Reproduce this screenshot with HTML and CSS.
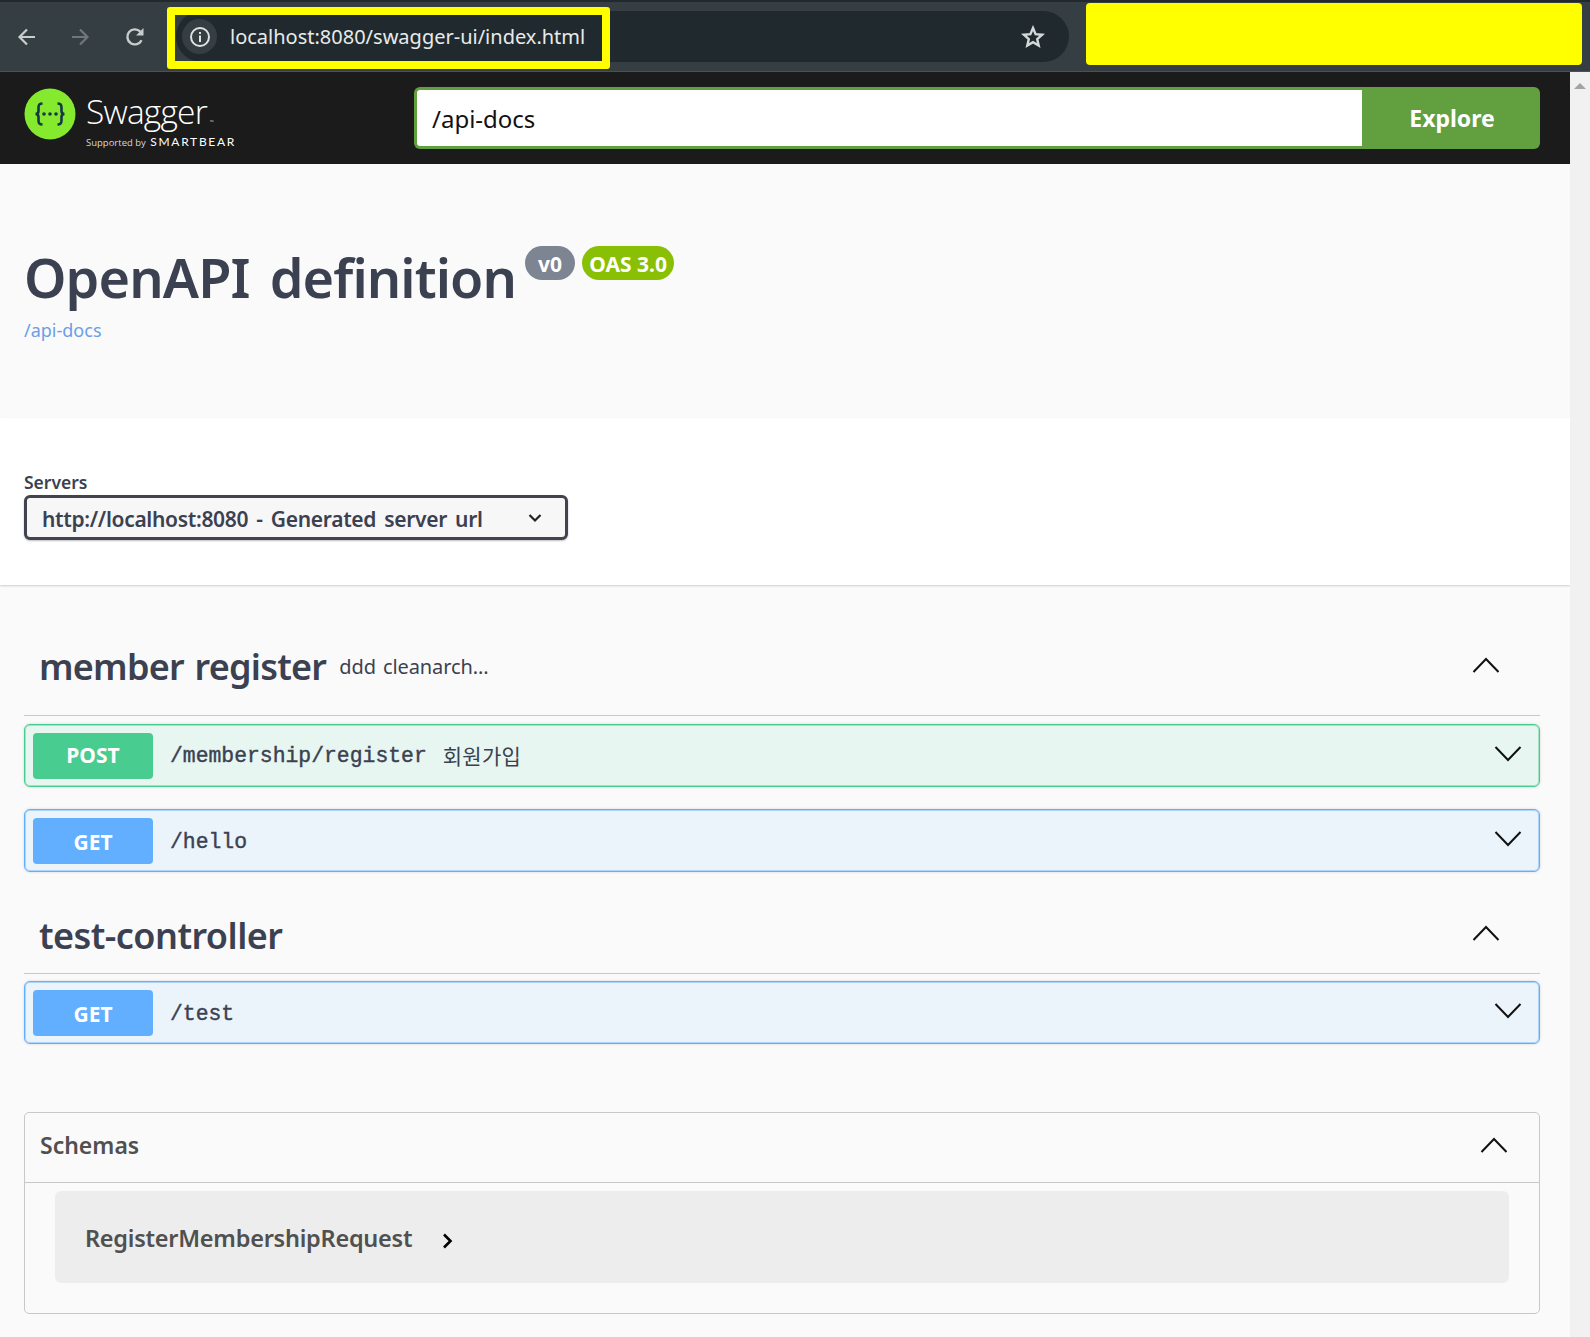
FILE: index.html
```html
<!DOCTYPE html>
<html lang="en">
<head>
  <meta charset="UTF-8"/>
  <title>Swagger UI</title>
  <meta name="viewport" content="width=device-width, initial-scale=1.0"/>
  <link rel="stylesheet" href="styles.css">
</head>
<body>

  <header class="toolbar">
    <div class="nav-buttons">
      <svg class="nav-icon" width="24" height="24" viewBox="0 0 24 24"><path d="M20 12H5M12 4.5 4.5 12l7.500 7.500" fill="none" stroke="#c8cccd" stroke-width="2.200"/></svg>
      <svg class="nav-icon nav-off" width="24" height="24" viewBox="0 0 24 24"><path d="M4 12h15M12 4.500l7.500 7.500-7.500 7.500" fill="none" stroke="#70777a" stroke-width="2.200"/></svg>
      <svg class="nav-icon nav-reload" width="24" height="24" viewBox="0 0 24 24"><path d="M18.600 15.200A7.500 7.500 0 1 1 17.300 6.700" fill="none" stroke="#c8cccd" stroke-width="2.400"/><path d="M20.500 3V10.500H13z" fill="#c8cccd"/></svg>
    </div>
    <div class="omnibox">
      <span class="site-info">
        <svg width="24" height="24" viewBox="0 0 24 24"><circle cx="12" cy="12" r="9" fill="none" stroke="#dfe2e3" stroke-width="2"/><path d="M12 10.500V17M12 7v2" stroke="#dfe2e3" stroke-width="2"/></svg>
      </span>
      <span class="url">localhost:8080/swagger-ui/index.html</span>
      <svg class="star" width="24" height="24" viewBox="0 0 24 24"><path d="M12 3l2.600 6.100 6.600.6-5 4.400 1.500 6.500L12 17.200l-5.700 3.400 1.500-6.500-5-4.400 6.600-.6z" fill="none" stroke="#d5d8d9" stroke-width="2.400"/></svg>
    </div>
    <div class="redact-block"></div>
    <div class="redact-outline"></div>
  </header>

  <div class="window">
    <main class="page">

      <section class="topbar">
        <div class="brand">
          <svg class="brand-logo" width="52" height="52" viewBox="0 0 52 52">
            <circle cx="26" cy="26" r="25.500" fill="#85ea2d"/>
            <path d="M18.500 15.500c-3.500 0-4 1.500-4 4v3.500c0 2-1 3-3 3 2 0 3 1 3 3V32.500c0 2.500.5 4 4 4M33.500 15.500c3.500 0 4 1.500 4 4v3.500c0 2 1 3 3 3-2 0-3 1-3 3V32.500c0 2.500-.5 4-4 4" fill="none" stroke="#173647" stroke-width="2.600"/>
            <circle cx="20" cy="26" r="1.800" fill="#173647"/><circle cx="26" cy="26" r="1.800" fill="#173647"/><circle cx="32" cy="26" r="1.800" fill="#173647"/>
          </svg>
          <div class="brand-text">
            <div class="brand-name">Swagger<span class="brand-tm">™</span></div>
            <div class="brand-sub">Supported by <b>SMARTBEAR</b></div>
          </div>
        </div>
        <div class="explore">
          <div class="explore-input">/api-docs</div>
          <div class="explore-btn">Explore</div>
        </div>
      </section>

      <section class="info">
        <div class="title-row">
          <h1>OpenAPI definition</h1>
          <span class="badge badge-version">v0</span>
          <span class="badge badge-oas">OAS 3.0</span>
        </div>
        <a class="spec-link" href="#">/api-docs</a>
      </section>

      <section class="servers">
        <div class="servers-label">Servers</div>
        <div class="server-select">
          <span class="server-url">http://localhost:8080 - Generated server url</span>
          <svg width="20" height="20" viewBox="0 0 20 20"><path d="M4.500 7l5.500 5.500L15.500 7" fill="none" stroke="#222" stroke-width="2.200"/></svg>
        </div>
      </section>

      <section class="ops">
        <div class="tag-head tag-first">
          <h3>member register</h3>
          <span class="tag-desc">ddd cleanarch...</span>
          <svg class="tag-arrow" width="28" height="16" viewBox="0 0 28 16"><path d="M1.500 15 14 2l12.500 13" fill="none" stroke="#111" stroke-width="2"/></svg>
        </div>
        <div class="op op-post">
          <span class="method">POST</span>
          <span class="path">/membership/register</span>
          <span class="summary">회원가입</span>
          <svg class="op-arrow" width="28" height="16" viewBox="0 0 28 16"><path d="M1.500 1 14 14 26.500 1" fill="none" stroke="#111" stroke-width="2"/></svg>
        </div>
        <div class="op op-get op-gap">
          <span class="method">GET</span>
          <span class="path">/hello</span>
          <svg class="op-arrow" width="28" height="16" viewBox="0 0 28 16"><path d="M1.500 1 14 14 26.500 1" fill="none" stroke="#111" stroke-width="2"/></svg>
        </div>

        <div class="tag-head tag-second">
          <h3>test-controller</h3>
          <svg class="tag-arrow" width="28" height="16" viewBox="0 0 28 16"><path d="M1.500 15 14 2l12.500 13" fill="none" stroke="#111" stroke-width="2"/></svg>
        </div>
        <div class="op op-get">
          <span class="method">GET</span>
          <span class="path">/test</span>
          <svg class="op-arrow" width="28" height="16" viewBox="0 0 28 16"><path d="M1.500 1 14 14 26.500 1" fill="none" stroke="#111" stroke-width="2"/></svg>
        </div>

        <div class="schemas">
          <div class="schemas-head">
            <span>Schemas</span>
            <svg width="28" height="16" viewBox="0 0 28 16"><path d="M1.500 15 14 2l12.500 13" fill="none" stroke="#111" stroke-width="2"/></svg>
          </div>
          <div class="model">
            <span>RegisterMembershipRequest</span>
            <svg class="model-arrow" width="12" height="16" viewBox="0 0 12 16"><path d="M2 1.500 8.500 8 2 14.500" fill="none" stroke="#000" stroke-width="2.600"/></svg>
          </div>
        </div>
      </section>

    </main>
    <aside class="scrollbar"><span class="scroll-up"></span></aside>
  </div>

</body>
</html>
```

FILE: styles.css
```css
html, body {
  margin: 0;
  height: 1337px;
  overflow: hidden;
}
body {
  font-family: "Noto Sans", "Noto Sans CJK KR", sans-serif;
  color: #3b4151;
  background: #fafafa;
}

/* browser chrome */
.toolbar {
  position: relative;
  display: flex;
  align-items: center;
  height: 72px;
  box-sizing: border-box;
  background: #353e42;
  border-top: 2px solid #23282b;
  border-bottom: 1px solid #4a5255;
  padding-right: 8px;
}
.nav-buttons {
  display: flex;
  align-items: center;
  gap: 29px;
  padding-left: 15px;
  width: 176px;
  box-sizing: border-box;
}
.nav-reload {
  margin-left: 2px;
}
.omnibox {
  display: flex;
  align-items: center;
  width: 893px;
  height: 51px;
  box-sizing: border-box;
  border-radius: 26px;
  background: #202a2e;
  padding: 0 24px 0 6px;
}
.site-info {
  display: flex;
  align-items: center;
  justify-content: center;
  width: 35px;
  height: 35px;
  border-radius: 50%;
  background: #353e42;
}
.url {
  margin-left: 13px;
  font-size: 20px;
  color: #e8eaeb;
  flex: 1;
}
.redact-block {
  align-self: flex-start;
  width: 496px;
  height: 62px;
  margin: 1px 0 0 17px;
  border-radius: 4px;
  background: #ffff00;
}
.redact-outline {
  position: absolute;
  left: 167px;
  top: 5px;
  width: 443px;
  height: 62px;
  box-sizing: border-box;
  border: 8px solid #ffff00;
  border-radius: 3px;
}

.window {
  display: flex;
  height: 1265px;
}
.page {
  flex: 1;
  min-width: 0;
}
.scrollbar {
  width: 20px;
  background: #f1f1f1;
  display: flex;
  justify-content: center;
  padding-top: 11px;
  box-sizing: border-box;
}
.scroll-up {
  width: 0;
  height: 0;
  border-left: 6px solid transparent;
  border-right: 6px solid transparent;
  border-bottom: 6px solid #a3a3a3;
}

/* swagger top bar */
.topbar {
  display: flex;
  align-items: center;
  height: 92px;
  background: #1b1b1b;
  padding: 0 30px 0 24px;
  box-sizing: border-box;
}
.brand {
  display: flex;
  align-items: center;
  gap: 10px;
  width: 390px;
}
.brand-logo {
  margin-bottom: 8px;
}
.brand-text {
  color: #fff;
  margin-top: 10px;
}
.brand-name {
  font-family: "Open Sans", sans-serif;
  font-weight: 300;
  font-size: 33.500px;
  line-height: 28px;
  letter-spacing: -.8px;
}
.brand-tm {
  font-size: 5px;
  letter-spacing: 0;
  margin-left: 3px;
}
.brand-sub {
  font-family: "Open Sans", sans-serif;
  font-size: 9.500px;
  line-height: 12px;
  color: #d8d8d8;
}
.brand-sub b {
  font-family: "Lato", sans-serif;
  font-weight: 400;
  font-size: 12px;
  letter-spacing: 1.700px;
  color: #fff;
  margin-left: 2px;
}
.explore {
  flex: 1;
  display: flex;
  height: 62px;
}
.explore-input {
  flex: 1;
  background: #fff;
  border: 3px solid #62a03f;
  border-right: 0;
  border-radius: 6px 0 0 6px;
  font-size: 24px;
  line-height: 58px;
  padding-left: 15px;
  color: #111;
}
.explore-btn {
  width: 176px;
  padding-left: 2px;
  background: #62a03f;
  border-radius: 0 6px 6px 0;
  color: #fff;
  font-size: 23px;
  font-weight: 700;
  line-height: 62px;
  text-align: center;
}

/* info */
.info {
  height: 254px;
  padding: 76px 24px 0;
  box-sizing: border-box;
  background: #fafafa;
}
.title-row {
  display: flex;
  align-items: flex-start;
  gap: 7px;
}
h1 {
  margin: 1px 2px 0 0;
  font-size: 54px;
  font-weight: 600;
  line-height: 72px;
  letter-spacing: -.9px;
  word-spacing: 7px;
  color: #3b4151;
}
.badge {
  margin-top: 6px;
  height: 34px;
  border-radius: 17px;
  color: #fff;
  font-size: 21px;
  font-weight: 700;
  line-height: 36px;
  text-align: center;
}
.badge-version {
  width: 50px;
  background: #7d8492;
}
.badge-oas {
  width: 92px;
  background: #89bf04;
}
.spec-link {
  display: block;
  margin-top: 5px;
  font-size: 18px;
  color: #6a9fe8;
  text-decoration: none;
}

/* servers */
.servers {
  height: 167px;
  padding: 52px 24px 0;
  box-sizing: border-box;
  background: #fff;
  box-shadow: 0 1px 2px rgba(0, 0, 0, .18);
}
.servers-label {
  font-size: 17.500px;
  font-weight: 600;
  line-height: 25px;
}
.server-select {
  display: flex;
  align-items: center;
  justify-content: space-between;
  width: 544px;
  height: 45px;
  box-sizing: border-box;
  border: 3px solid #41444e;
  border-radius: 6px;
  background: #f7f7f7;
  box-shadow: 0 1px 2px rgba(0, 0, 0, .25);
  padding: 0 20px 0 15px;
  font-size: 21px;
  font-weight: 600;
}
.server-url {
  padding-top: 3px;
  letter-spacing: -.32px;
  word-spacing: 3px;
}

/* operations */
.ops {
  padding: 0 30px 0 24px;
}
.tag-head {
  display: flex;
  align-items: center;
  box-sizing: border-box;
  border-bottom: 1px solid #c8c8ca;
  padding: 0 40px 0 15px;
}
.tag-first {
  height: 99px;
  margin-top: 32px;
}
.tag-second {
  height: 77px;
  margin-top: 25px;
}
.tag-head h3 {
  margin: 0;
  font-size: 36px;
  font-weight: 600;
  letter-spacing: -.75px;
  word-spacing: 2px;
}
.tag-second h3 {
  letter-spacing: -.55px;
}
.tag-desc {
  margin-left: 13px;
  font-size: 20px;
  letter-spacing: -.1px;
  word-spacing: 2px;
}
.tag-arrow {
  margin: 0 0 3px auto;
}
.tag-second .tag-arrow {
  margin-bottom: 5px;
}
.op {
  display: flex;
  align-items: center;
  height: 63px;
  margin-top: 7px;
  box-sizing: border-box;
  border: 1px solid;
  border-radius: 6px;
  padding: 0 17px 0 8px;
}
.op-gap {
  margin-top: 22px;
}
.op-post {
  margin-top: 8px;
  border-color: #49cc90;
  background: #e7f6f0;
  box-shadow: inset 0 0 0 1px rgba(73, 204, 144, .45), 0 0 3px rgba(0, 0, 0, .15);
}
.op-get {
  border-color: #61affe;
  background: #ebf3fb;
  box-shadow: inset 0 0 0 1px rgba(97, 175, 254, .45), 0 0 3px rgba(0, 0, 0, .15);
}
.method {
  width: 120px;
  height: 46px;
  border-radius: 4px;
  color: #fff;
  font-size: 21px;
  font-weight: 700;
  line-height: 46px;
  text-align: center;
}
.op-post .method {
  background: #49cc90;
  line-height: 44px;
}
.op-get .method {
  background: #61affe;
  line-height: 48px;
}
.path {
  margin-left: 17px;
  padding-top: 3px;
  font-family: "Liberation Mono", monospace;
  font-size: 21.400px;
  font-weight: 400;
  -webkit-text-stroke: .4px #3b4151;
}
.op-post .path {
  padding-top: 1px;
}
.summary {
  margin-left: 16px;
  padding-bottom: 2px;
  font-family: "Noto Sans CJK KR", sans-serif;
  font-size: 21px;
  letter-spacing: .3px;
}
.op-arrow {
  margin: 0 0 3px auto;
}

/* schemas */
.schemas {
  height: 202px;
  margin-top: 68px;
  box-sizing: border-box;
  border: 1px solid #c8c8ca;
  border-radius: 5px;
}
.schemas-head {
  display: flex;
  align-items: center;
  justify-content: space-between;
  height: 70px;
  box-sizing: border-box;
  border-bottom: 1px solid #c8c8ca;
  padding: 0 31px 6px 15px;
  font-size: 23px;
  font-weight: 600;
  color: #505050;
}
.model {
  display: flex;
  align-items: center;
  gap: 30px;
  height: 92px;
  margin: 8px 30px 0;
  padding: 2px 30px 0;
  box-sizing: border-box;
  border-radius: 6px;
  background: #ededed;
  font-size: 23.500px;
  font-weight: 600;
  letter-spacing: -.25px;
  color: #505050;
}
.model-arrow {
  margin-top: 6px;
}
```
